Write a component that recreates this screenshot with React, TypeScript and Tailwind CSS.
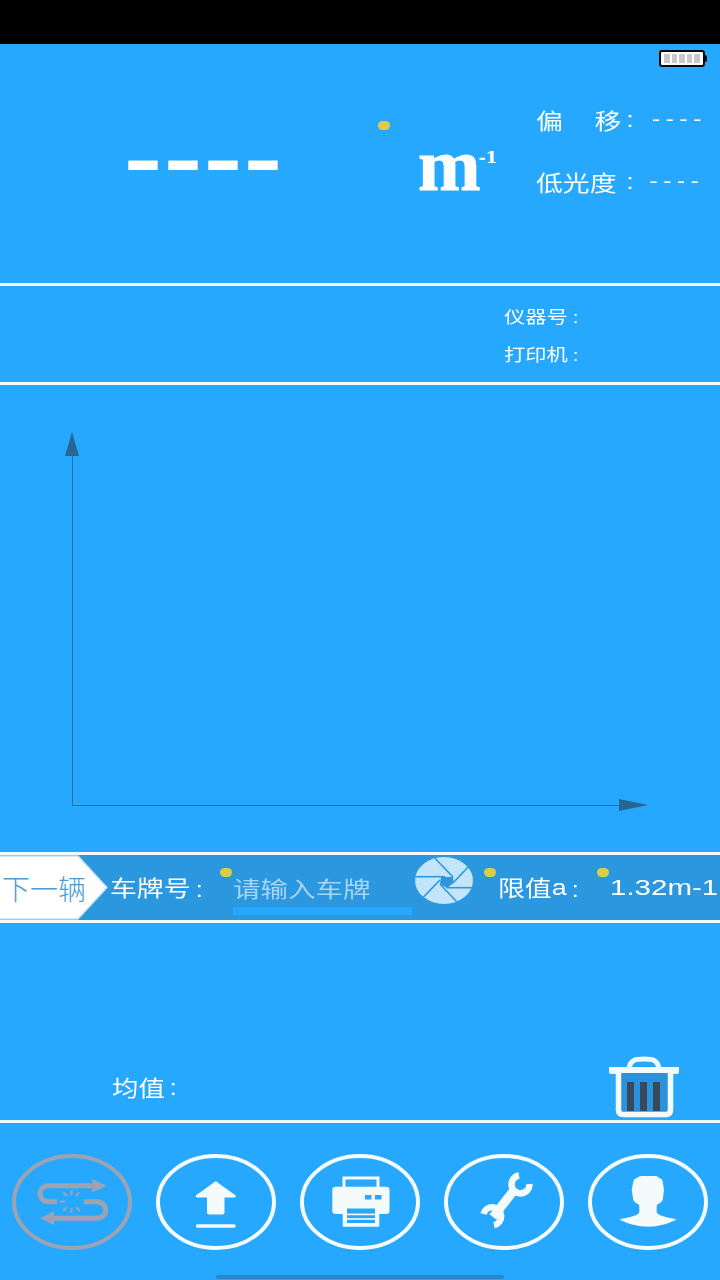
const cjk = "font-['Noto_Sans_CJK_SC','Noto_Sans',sans-serif]";
const latin = "font-['Liberation_Sans',sans-serif]";

function Dot({ className }: { className: string }) {
  return <span className={`absolute h-[9px] w-[12px] rounded-full bg-[#dccb4c] ${className}`} />;
}

function Battery() {
  return (
    <div className="flex items-center">
      <div className="flex h-[17px] w-[46px] gap-[2px] rounded-[3px] border-2 border-[#06090f] bg-white px-[3px] py-[2px]">
        {[0, 1, 2, 3, 4].map((i) => (
          <span key={i} className="flex-1 bg-[#c8c8c8]" />
        ))}
      </div>
      <span className="h-[7px] w-[2px] rounded-r-sm bg-[#06090f]" />
    </div>
  );
}

function Shutter() {
  const blades = [
    [20, 1.3, 38, 20],
    [55, 8, 38, 26],
    [56.7, 30.7, 32, 30.7],
    [41.7, 44.7, 25, 27],
    [7.3, 41.3, 25, 23],
    [0, 19.7, 30, 19.7],
  ];
  return (
    <svg viewBox="0 0 58 47" className="h-[47px] w-[58px]">
      <ellipse cx="29" cy="23.5" rx="29" ry="23.5" fill="#c2e5fc" />
      <polygon points="26,20 38,20 38.5,26 32,31 25,27" fill="#2b97de" />
      {blades.map((b, i) => (
        <line key={i} x1={b[0]} y1={b[1]} x2={b[2]} y2={b[3]} stroke="#2b97de" strokeWidth="1.6" />
      ))}
    </svg>
  );
}

function Trash() {
  return (
    <svg viewBox="0 0 72 62" className="h-[62px] w-[72px] blur-[0.7px]">
      <path d="M21 12 C23 3.5 28 3 36 3 C44 3 49 3.5 51 12" fill="none" stroke="#f4fbff" strokeWidth="5" />
      <path d="M1 11 H71 V16 Q71 18 69 18 H3 Q1 18 1 16 Z" fill="#f4fbff" />
      <path d="M10.5 17 V54 Q10.5 58.5 15 58.5 H58 Q62.5 58.5 62.5 54 V17" fill="#2c92db" stroke="#f4fbff" strokeWidth="5.5" />
      <rect x="19" y="26" width="7" height="29" fill="#37495a" />
      <rect x="32" y="26" width="7" height="29" fill="#37495a" />
      <rect x="45" y="26" width="7" height="29" fill="#37495a" />
    </svg>
  );
}

function SwapIcon() {
  const spokes = [
    [64, 42, 67, 38],
    [59.5, 41, 59.5, 36],
    [55, 42, 51, 38],
    [53, 47.5, 48, 47.5],
    [55, 53, 51, 57],
    [59.5, 54, 59.5, 59],
    [64, 53, 68, 57],
  ];
  return (
    <svg viewBox="0 0 120 96" className="h-full w-full">
      <ellipse cx="60" cy="48" rx="58" ry="46" fill="none" stroke="#9da3b0" strokeWidth="4" />
      <path d="M82 31.7 H37 C25 31.7 25 47.7 37 47.7 H45" fill="none" stroke="#9da3b0" strokeWidth="5" />
      <path d="M94.7 31.7 L80.3 25 V38.3 Z" fill="#9da3b0" />
      <path d="M72 47.7 H84 C97 47.7 97 64.3 84 64.3 H40" fill="none" stroke="#9da3b0" strokeWidth="5" />
      <path d="M28 64.3 L42 57.6 V71 Z" fill="#9da3b0" />
      {spokes.map((s, i) => (
        <line key={i} x1={s[0]} y1={s[1]} x2={s[2]} y2={s[3]} stroke="#9da3b0" strokeWidth="2" />
      ))}
    </svg>
  );
}

function UploadIcon() {
  return (
    <svg viewBox="0 0 120 96" className="h-full w-full">
      <ellipse cx="60" cy="48" rx="58" ry="46" fill="none" stroke="#f5fafa" strokeWidth="4" />
      <path d="M59.7 27.5 Q61 27.5 63 29.5 L79 41 Q81 43.5 78 43.5 H68.5 V58 Q68.5 60.5 66 60.5 H53.5 Q51 60.5 51 58 V43.5 H41.5 Q38.5 43.5 40.5 41 L56.5 29.5 Q58.5 27.5 59.7 27.5 Z" fill="#f5fafa" />
      <line x1="41.5" y1="72" x2="78" y2="72" stroke="#f5fafa" strokeWidth="3.4" strokeLinecap="round" />
    </svg>
  );
}

function PrinterIcon() {
  return (
    <svg viewBox="0 0 120 96" className="h-full w-full">
      <ellipse cx="60" cy="48" rx="58" ry="46" fill="none" stroke="#f5fafa" strokeWidth="4" />
      <rect x="44" y="24" width="34" height="12" fill="none" stroke="#f5fafa" strokeWidth="3" />
      <path d="M36 32.7 H86 Q89.5 32.7 89.5 36 V57 Q89.5 60 86 60 H36 Q32.3 60 32.3 57 V36 Q32.3 32.7 36 32.7 Z" fill="#f5fafa" />
      <rect x="65" y="41" width="6.5" height="4.5" fill="#27a8ff" />
      <rect x="75" y="41" width="6.5" height="4.5" fill="#27a8ff" />
      <rect x="42.7" y="51" width="36.6" height="21.7" rx="1" fill="#f5fafa" />
      <rect x="47" y="54.5" width="28" height="14.5" fill="#27a8ff" />
      <rect x="47" y="59.6" width="28" height="1.6" fill="#f5fafa" />
      <rect x="47" y="64.2" width="28" height="1.6" fill="#f5fafa" />
    </svg>
  );
}

function WrenchIcon() {
  return (
    <svg viewBox="0 0 120 96" className="h-full w-full">
      <ellipse cx="60" cy="48" rx="58" ry="46" fill="none" stroke="#f5fafa" strokeWidth="4" />
      <path d="M49 63 L71 35" fill="none" stroke="#f5fafa" strokeWidth="9" />
      <path d="M75 21.5 A 9 9 0 1 0 85.5 30" fill="none" stroke="#f5fafa" strokeWidth="6.5" />
      <path d="M39.5 60 A 9 9 0 1 1 50 71" fill="none" stroke="#f5fafa" strokeWidth="6.5" />
    </svg>
  );
}

function PersonIcon() {
  return (
    <svg viewBox="0 0 120 96" className="h-full w-full">
      <ellipse cx="60" cy="48" rx="58" ry="46" fill="none" stroke="#f5fafa" strokeWidth="4" />
      <path d="M45.3 27.7 C46 25 47 24.5 48.7 24.3 C50 22.5 52 22 55.3 22 H66 C69 22 70 22.5 71 24 C73.5 24.5 74.5 25.5 74.7 27.7 L76 36 L74.7 46 C73 49 70 50 68.7 51 V58 C68.7 61 78 63.5 88.7 65.3 C80 70 70 72.7 60.3 72.7 C50 72.7 40 70 31.3 65.3 C42 63.5 51.3 61 51.3 58 V51 C50 50 47 49 45.3 46 L43.7 36 Z" fill="#f5fafa" />
    </svg>
  );
}

export default function App() {
  return (
    <div className={`flex h-[1280px] w-[720px] flex-col overflow-hidden bg-[#27a8ff] text-white ${cjk}`}>
      <div className="h-[44px] shrink-0 bg-black" />

      {/* readout */}
      <section className="relative h-[242px] shrink-0 border-b-[3px] border-[#f2f9ff]">
        <div className="flex justify-end pr-[13px] pt-[6px]">
          <Battery />
        </div>
        <Dot className="left-[378px] top-[77px]" />
        <div className="flex items-start">
          <div className={`ml-[123px] mt-[28px] w-[295px] ${latin} text-[120px] leading-[120px]`}>----</div>
          <div className="mt-[56px] flex w-[118px] items-start font-['Liberation_Serif',serif] font-bold">
            <span className="text-[75px] leading-[84px] [-webkit-text-stroke:1px_white]">m</span>
            <span className="-ml-[2px] mt-[24px] font-['DejaVu_Serif',serif] text-[17px] leading-[20px]">-1</span>
          </div>
          <div className="mt-[33px] flex flex-col gap-[24px] whitespace-nowrap text-[22px] leading-[36px]">
            <div className="flex origin-left scale-x-[1.22] items-center">
              <span>偏</span>
              <span className="ml-[26px]">移</span>
              <span className={`ml-[4px] mt-[2px] w-[21px] ${latin}`}>:</span>
              <span className={`${latin} text-[20px] tracking-[4.6px]`}>----</span>
            </div>
            <div className="flex origin-left scale-x-[1.22] items-center">
              <span>低光度</span>
              <span className={`ml-[8px] mt-[2px] w-[19px] ${latin}`}>:</span>
              <span className={`${latin} text-[20px] tracking-[4.6px]`}>----</span>
            </div>
          </div>
        </div>
      </section>

      {/* device info */}
      <section className="flex h-[99px] shrink-0 flex-col gap-[6px] border-b-[3px] border-[#f2f9ff] pl-[504px] pt-[15px] text-[17px] leading-[30px]">
        <div className="flex origin-left scale-x-[1.25]">
          <span>仪器号</span>
          <span className={`ml-[4px] mt-[2px] ${latin}`}>:</span>
        </div>
        <div className="flex origin-left scale-x-[1.25]">
          <span>打印机</span>
          <span className={`ml-[4px] mt-[2px] ${latin}`}>:</span>
        </div>
      </section>

      {/* chart */}
      <section className="h-[470px] shrink-0 border-b-[3px] border-[#f2f9ff]">
        <svg viewBox="0 0 720 467" className="h-[467px] w-[720px]">
          <line x1="72.5" y1="60" x2="72.5" y2="420.5" stroke="#2a6ea3" strokeWidth="1" />
          <line x1="72" y1="420.5" x2="620" y2="420.5" stroke="#2a6ea3" strokeWidth="1" />
          <polygon points="72,47 79,71 65,71" fill="#2a6490" />
          <polygon points="648,420 619,414 619,426" fill="#2a6490" />
        </svg>
      </section>

      {/* plate bar */}
      <section className="relative flex h-[68px] shrink-0 items-center overflow-hidden border-b-[3px] border-[#f2f9ff] bg-[#2b97de] text-[22px]">
        <div className="relative flex h-full w-[110px] shrink-0 items-center pl-[2px] text-[28px] font-light text-[#4d9cd6]">
          <svg viewBox="0 0 110 65" className="absolute inset-0 h-[65px] w-[110px]">
            <polygon points="-3,1 78,1 107,32.5 78,64 -3,64" fill="#ffffff" stroke="#c9def0" strokeWidth="1.5" strokeLinejoin="round" />
          </svg>
          <span className="relative">下一辆</span>
        </div>
        <div className="flex w-[123px] shrink-0 origin-left scale-x-[1.22] whitespace-nowrap">
          <span>车牌号</span>
          <span className={`ml-[4px] mt-[3px] ${latin}`}>:</span>
        </div>
        <div className="relative h-full w-[182px] shrink-0">
          <div className="origin-left scale-x-[1.25] whitespace-nowrap pt-[14px] leading-[36px] text-[#a6d5f6]">请输入车牌</div>
          <div className="absolute bottom-[5px] left-0 h-[8px] w-[179px] bg-[#27a8ff]" />
        </div>
        <div className="w-[83px] shrink-0 self-start pt-[2px]">
          <Shutter />
        </div>
        <div className="flex w-[112px] shrink-0 origin-left scale-x-[1.22] whitespace-nowrap">
          <span>限值</span>
          <span className={`mt-[1px] ${latin}`}>a</span>
          <span className={`ml-[4px] mt-[3px] ${latin}`}>:</span>
        </div>
        <div className={`shrink-0 origin-left scale-x-[1.34] whitespace-nowrap ${latin}`}>1.32m-1</div>
        <Dot className="left-[220px] top-[13px]" />
        <Dot className="left-[484px] top-[13px]" />
        <Dot className="left-[597px] top-[13px]" />
      </section>

      {/* average */}
      <section className="flex h-[200px] shrink-0 items-end justify-between border-b-[3px] border-[#f2f9ff] pb-[2px] pl-[112px] pr-[40px]">
        <div className="flex origin-left scale-x-[1.2] pb-[13px] text-[22px] leading-[34px]">
          <span>均值</span>
          <span className={`ml-[4px] mt-[2px] ${latin}`}>:</span>
        </div>
        <Trash />
      </section>

      {/* actions */}
      <section className="flex flex-1 flex-col">
        <div className="flex gap-[24px] pl-[12px] pt-[31px]">
          <div className="h-[96px] w-[120px]"><SwapIcon /></div>
          <div className="h-[96px] w-[120px]"><UploadIcon /></div>
          <div className="h-[96px] w-[120px]"><PrinterIcon /></div>
          <div className="h-[96px] w-[120px]"><WrenchIcon /></div>
          <div className="h-[96px] w-[120px]"><PersonIcon /></div>
        </div>
        <div className="mx-auto mt-[25px] h-[4px] w-[288px] rounded-full bg-[#2a86c8]" />
      </section>
    </div>
  );
}
